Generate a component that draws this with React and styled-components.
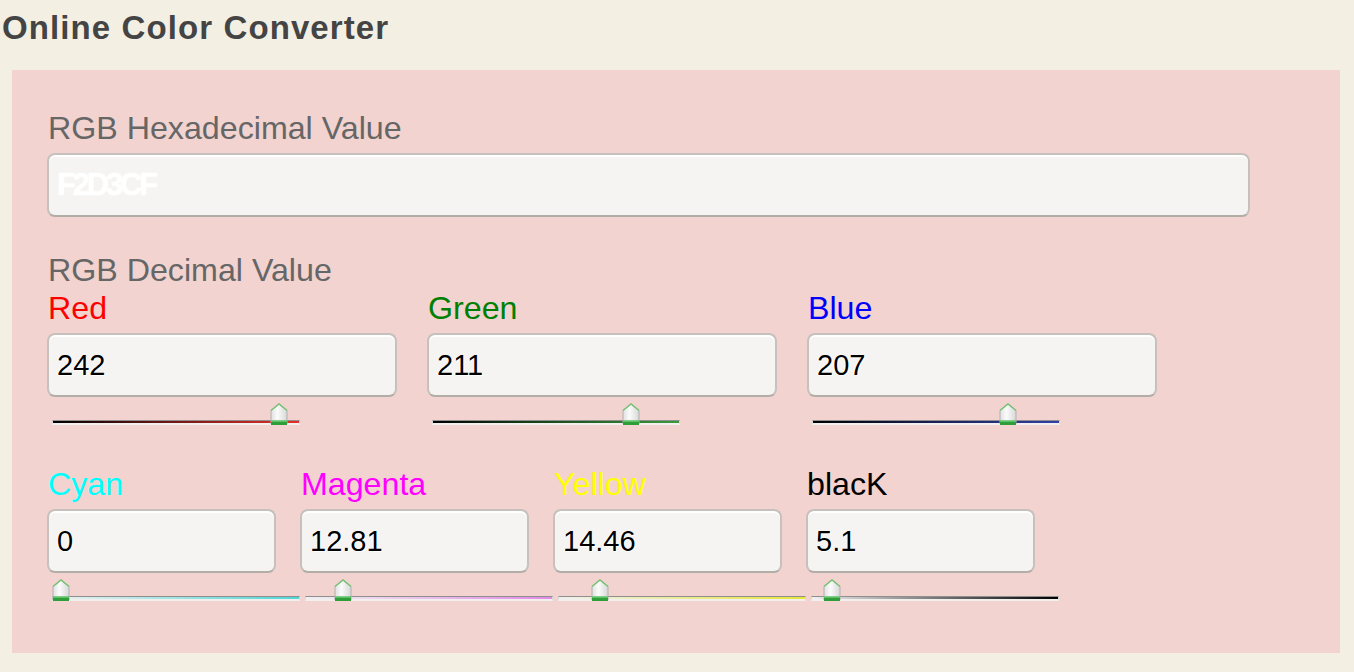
import React from "react";
import styled, { createGlobalStyle } from "styled-components";

const GlobalStyle = createGlobalStyle`
  html, body {
    margin: 0;
    padding: 0;
    background-color: #f3efe3;
    font-family: "Liberation Sans", Arial, sans-serif;
  }
`;

const Page = styled.div`
  width: 1354px;
  height: 672px;
  overflow: hidden;
`;

const Title = styled.h1`
  margin: 0;
  padding-left: 2px;
  height: 70px;
  line-height: 56px;
  font-size: 33px;
  font-weight: bold;
  letter-spacing: 1.1px;
  color: #444;
`;

const Panel = styled.div`
  margin-left: 12px;
  width: 1328px;
  box-sizing: border-box;
  padding: 40px 35px 51px;
  background-color: #f2d3cf;
`;

const Label = styled.div`
  font-size: 32.2px;
  line-height: 36px;
  height: 36px;
  padding-left: 1px;
  color: ${(p) => p.color || "#666"};
  margin-top: ${(p) => p.top || 0}px;
`;

const TextBox = styled.input`
  display: block;
  box-sizing: border-box;
  width: ${(p) => p.w}px;
  height: 64px;
  margin-top: 7px;
  padding: 0 0 0 8px;
  background-color: #f5f4f2;
  border: 2px solid #c6c1bd;
  border-bottom-color: #b3ada8;
  border-radius: 8px;
  box-shadow: inset 0 2px 0 #ffffff;
  font-family: "Liberation Sans", Arial, sans-serif;
  font-size: 29px;
  color: #000;
  text-shadow: 1px 1px 0 #fff, -1px 0 0 #fff;
  outline: none;
`;

const HexBox = styled(TextBox)`
  font-size: 31px;
  font-weight: bold;
  letter-spacing: -3.2px;
  color: #ffffff;
  text-shadow: 0 0 2px #fff;
`;

const Row = styled.div`
  display: grid;
  grid-template-columns: repeat(${(p) => p.cols}, ${(p) => p.colw}px);
  margin-top: ${(p) => p.top || 0}px;
`;

const Column = styled.div`
  display: flex;
  flex-direction: column;
`;

const SliderWrap = styled.div`
  position: relative;
  width: 248px;
  height: 23px;
  margin-top: 6px;
  margin-left: 5px;
`;

const Track = styled.div`
  position: absolute;
  left: 0;
  right: 0;
  bottom: 1px;
  height: 2px;
  border-top: 1px solid #8e8e8e;
  border-bottom: 2px solid #f1f0ee;
  border-left: 1px solid #d8d8d8;
  border-right: 1px solid #d8d8d8;
  background: linear-gradient(to right, ${(p) => p.from}, ${(p) => p.to});
`;

const Thumb = styled.svg`
  position: absolute;
  top: 0;
`;

const Slider = ({ value, max, from, to }) => {
  const x = (value / max) * (248 - 18);
  return (
    <SliderWrap>
      <Track from={from} to={to} />
      <Thumb width="18" height="23" viewBox="0 0 18 23" style={{ left: x }}>
        <defs>
          <linearGradient id="tb" x1="0" y1="0" x2="1" y2="0">
            <stop offset="0" stopColor="#e0e0e0" />
            <stop offset="0.4" stopColor="#fbfbfb" />
            <stop offset="1" stopColor="#d8d8d8" />
          </linearGradient>
        </defs>
        <path d="M1 7.5 L9 1 L17 7.5 L17 21 L1 21 Z" fill="url(#tb)" stroke="#b0b0b0" strokeWidth="1" />
        <path d="M1 7.5 L9 1 L17 7.5" fill="none" stroke="#74c274" strokeWidth="1.4" />
        <rect x="1" y="17.5" width="16" height="4.5" fill="#2f9e3a" />
        <rect x="1" y="17.5" width="16" height="1.2" fill="#72d27a" />
      </Thumb>
    </SliderWrap>
  );
};

const rgb = [
  { name: "Red", color: "#ff0000", value: 242, to: "#e8302a" },
  { name: "Green", color: "#008000", value: 211, to: "#3c9a3c" },
  { name: "Blue", color: "#0000ff", value: 207, to: "#3340a6" },
];

const cmyk = [
  { name: "Cyan", color: "#00ffff", value: "0", to: "#4fd6d6" },
  { name: "Magenta", color: "#ff00ff", value: "12.81", to: "#e38ae6" },
  { name: "Yellow", color: "#ffff00", value: "14.46", to: "#e6e63a" },
  { name: "blacK", color: "#000000", value: "5.1", to: "#000000" },
];

const App = () => {
  return (
    <Page>
      <GlobalStyle />
      <Title>Online Color Converter</Title>
      <Panel>
        <Label>RGB Hexadecimal Value</Label>
        <HexBox w={1203} defaultValue="F2D3CF" />

        <Label top={35}>RGB Decimal Value</Label>
        <Row cols={3} colw={380}>
          {rgb.map((c) => (
            <Column key={c.name}>
              <Label top={2} color={c.color}>{c.name}</Label>
              <TextBox w={350} defaultValue={c.value} />
              <Slider value={c.value} max={255} from="#000000" to={c.to} />
            </Column>
          ))}
        </Row>

        <Row cols={4} colw={253} top={40}>
          {cmyk.map((c) => (
            <Column key={c.name}>
              <Label color={c.color}>{c.name}</Label>
              <TextBox w={229} defaultValue={c.value} />
              <Slider value={parseFloat(c.value)} max={100} from="#f0f0f0" to={c.to} />
            </Column>
          ))}
        </Row>
      </Panel>
    </Page>
  );
};

export default App;
